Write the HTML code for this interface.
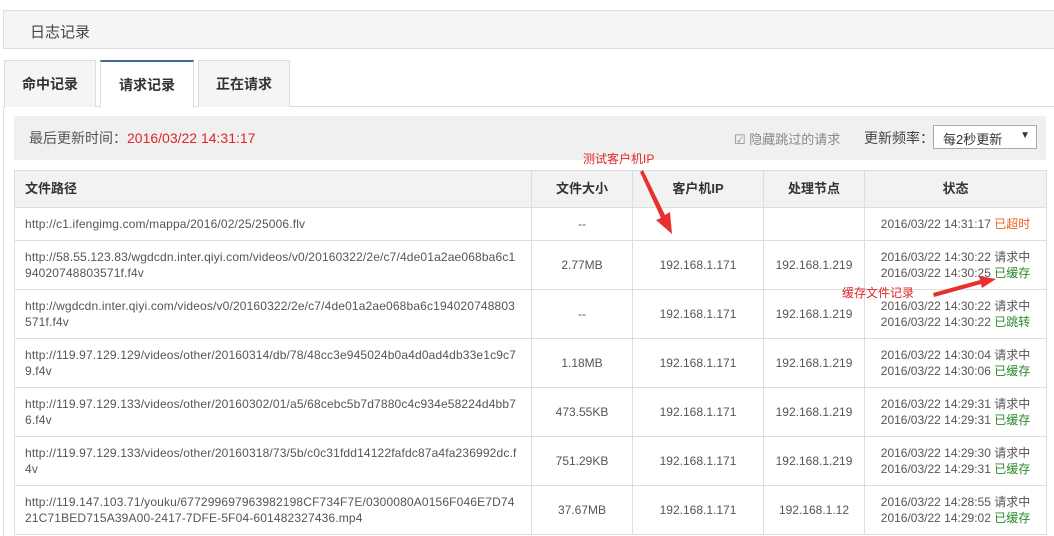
<!DOCTYPE html>
<html><head><meta charset="utf-8"><style>
*{margin:0;padding:0;box-sizing:border-box}
body{width:1054px;height:533px;overflow:hidden;background:#fff;font-family:"Liberation Sans","Noto Sans CJK SC",sans-serif;position:relative;color:#555}
.hdr{position:absolute;left:3px;top:10px;width:1060px;height:39px;background:#f5f5f5;border:1px solid #ddd;font-size:15px;color:#444;padding:10px 0 0 26px}
.tab{position:absolute;top:60px;height:47px;border:1px solid #ddd;border-bottom:none;background:#f5f5f5;font-size:14px;font-weight:bold;color:#333;text-align:center;padding-top:13px}
.line{position:absolute;left:3px;top:106px;width:1060px;border-top:1px solid #ddd}
.vl{position:absolute;left:3px;top:106px;height:430px;border-left:1px solid #ddd}
.info{position:absolute;left:14px;top:116px;width:1032px;height:44px;background:#f0f0f0;font-size:14px;color:#555;padding:12px 0 0 15px}
.red{color:#e0262a}
table{position:absolute;left:14px;top:170px;width:1033px;border-collapse:collapse;font-size:12px;color:#555}
td,th{border:1px solid #ddd;line-height:16px}
th{background:#f2f2f2;height:37px;font-weight:bold;color:#333;font-size:13px}
td{text-align:center}
td.p{text-align:left;padding:0 10px;word-break:break-all;letter-spacing:0.15px}
tr{height:49px}
.g{color:#2a8a2a}.o{color:#f06020}
</style></head><body>
<div class="hdr">日志记录</div>
<div class="line"></div><div class="vl"></div>
<div class="tab" style="left:4px;width:92px">命中记录</div>
<div class="tab" style="left:100px;width:94px;background:#fff;border-top:2px solid #3d6a99;height:48px">请求记录</div>
<div class="tab" style="left:198px;width:92px">正在请求</div>
<div class="info">最后更新时间：<span class="red">2016/03/22 14:31:17</span>
<span style="position:absolute;left:720px;top:13px;font-size:13px;color:#888">☑ 隐藏跳过的请求</span>
<span style="position:absolute;left:850px;top:12px;font-size:14px;color:#444">更新频率：</span>
<span style="position:absolute;left:919px;top:9px;width:104px;height:24px;background:#fff;border:1px solid #aaa;font-size:13px;color:#333;padding:3px 0 0 9px">每2秒更新<span style="position:absolute;right:6px;top:4px;font-size:10px">▼</span></span>
</div>
<table>
<tr style="height:37px"><th style="width:517px;text-align:left;padding-left:10px">文件路径</th><th style="width:101px">文件大小</th><th style="width:131px">客户机IP</th><th style="width:101px">处理节点</th><th>状态</th></tr>
<tr style="height:33px"><td class="p">http://c1.ifengimg.com/mappa/2016/02/25/25006.flv</td><td>--</td><td></td><td></td><td>2016/03/22 14:31:17 <span class="o">已超时</span></td></tr>
<tr><td class="p">http://58.55.123.83/wgdcdn.inter.qiyi.com/videos/v0/20160322/2e/c7/4de01a2ae068ba6c1 94020748803571f.f4v</td><td>2.77MB</td><td>192.168.1.171</td><td>192.168.1.219</td><td>2016/03/22 14:30:22 请求中<br>2016/03/22 14:30:25 <span class="g">已缓存</span></td></tr>
<tr><td class="p">http://wgdcdn.inter.qiyi.com/videos/v0/20160322/2e/c7/4de01a2ae068ba6c194020748803 571f.f4v</td><td>--</td><td>192.168.1.171</td><td>192.168.1.219</td><td>2016/03/22 14:30:22 请求中<br>2016/03/22 14:30:22 <span class="g">已跳转</span></td></tr>
<tr><td class="p">http://119.97.129.129/videos/other/20160314/db/78/48cc3e945024b0a4d0ad4db33e1c9c7 9.f4v</td><td>1.18MB</td><td>192.168.1.171</td><td>192.168.1.219</td><td>2016/03/22 14:30:04 请求中<br>2016/03/22 14:30:06 <span class="g">已缓存</span></td></tr>
<tr><td class="p">http://119.97.129.133/videos/other/20160302/01/a5/68cebc5b7d7880c4c934e58224d4bb7 6.f4v</td><td>473.55KB</td><td>192.168.1.171</td><td>192.168.1.219</td><td>2016/03/22 14:29:31 请求中<br>2016/03/22 14:29:31 <span class="g">已缓存</span></td></tr>
<tr><td class="p">http://119.97.129.133/videos/other/20160318/73/5b/c0c31fdd14122fafdc87a4fa236992dc.f 4v</td><td>751.29KB</td><td>192.168.1.171</td><td>192.168.1.219</td><td>2016/03/22 14:29:30 请求中<br>2016/03/22 14:29:31 <span class="g">已缓存</span></td></tr>
<tr><td class="p">http://119.147.103.71/youku/677299697963982198CF734F7E/0300080A0156F046E7D74 21C71BED715A39A00-2417-7DFE-5F04-601482327436.mp4</td><td>37.67MB</td><td>192.168.1.171</td><td>192.168.1.12</td><td>2016/03/22 14:28:55 请求中<br>2016/03/22 14:29:02 <span class="g">已缓存</span></td></tr>
</table>
<div style="position:absolute;left:583px;top:150px;font-size:12px;color:#e0262a">测试客户机IP</div>
<div style="position:absolute;left:842px;top:284px;font-size:12px;color:#e0262a">缓存文件记录</div>
<svg style="position:absolute;left:0;top:0" width="1054" height="533">
<polygon points="640,172 643,170 665,215 670,212 672,234 656,220 661,218" fill="#e8312e"/>
<polygon points="934,297 933,293 980,280 979,276 996,279 982,288 981,284" fill="#e8312e"/>
</svg>
</body></html>
